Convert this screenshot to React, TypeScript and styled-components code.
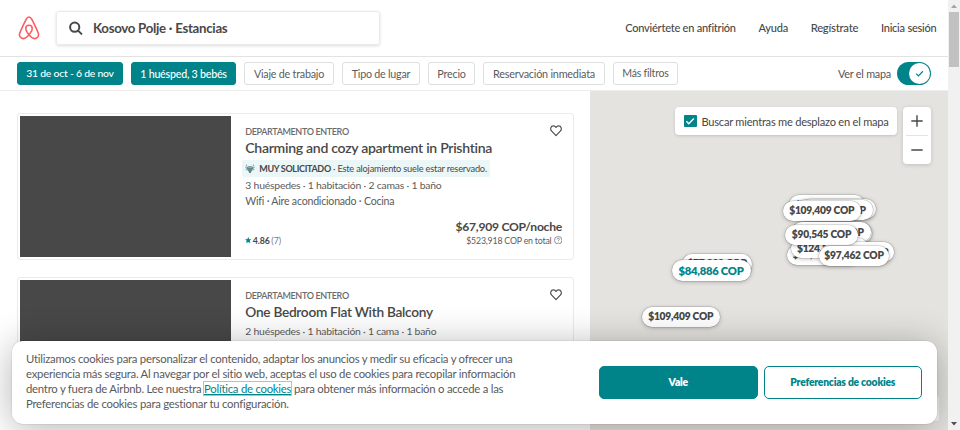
import React from "react";
import styled, { createGlobalStyle, css } from "styled-components";

const Global = createGlobalStyle`
  *{box-sizing:border-box}
  html,body{margin:0;overflow:hidden}
  body{font-family:Lato,"Noto Sans",sans-serif;color:#484848;background:#fff}
  button{font-family:inherit;padding:0;cursor:pointer}
`;
const teal = "#008489";

/* Slightly enlarged letters set tighter, so a line keeps the width of its nominal size. */
const type = (size: number) => css`font-size:${(size * 1.05).toFixed(2)}px;letter-spacing:-.0212em;`;

const Window = styled.div`display:flex;width:960px;height:430px;overflow:hidden;`;
const Page = styled.div`position:relative;width:948px;height:430px;display:flex;flex-direction:column;overflow:hidden;`;

const Header = styled.header`
  flex:none;height:57px;display:flex;align-items:center;padding:0 11.5px 0 18px;border-bottom:1px solid #e2e2e2;
`;
const Logo = styled.svg`width:22px;height:24px;flex:none;`;
const SearchBox = styled.div`
  width:324px;height:34px;margin-left:16px;display:flex;align-items:center;gap:10px;padding-left:12px;
  border:1px solid #ebebeb;border-radius:3px;box-shadow:0 1px 3px rgba(0,0,0,.14);
  ${type(12.62)}font-weight:700;
  svg{width:14px;height:14px;}
`;
const Nav = styled.nav`margin-left:auto;display:flex;gap:22.7px;font-weight:500;`;
const NavLink = styled.a<{ $size: number }>`${p => type(p.$size)}line-height:14px;white-space:nowrap;`;

const Filters = styled.div`
  flex:none;height:34px;display:flex;align-items:center;padding:0 17px;gap:8px;border-bottom:1px solid #ededed;
`;
const Chip = styled.button<{ $w: number; $size: number; $on?: boolean }>`
  width:${p => p.$w}px;height:23px;flex:none;border-radius:3px;white-space:nowrap;${p => type(p.$size)}
  padding-bottom:1px;
  border:1px solid ${p => (p.$on ? teal : "#dce0e0")};
  background:${p => (p.$on ? teal : "#fff")};color:${p => (p.$on ? "#fff" : "#5c5c5c")};
  ${p => p.$on && css`font-weight:500;`}
`;
const MapSwitch = styled.label`margin-left:auto;display:flex;align-items:center;gap:6px;${type(10.3)}color:#555;`;
const Track = styled.span`
  width:34px;height:23px;border-radius:12px;background:${teal};display:flex;justify-content:flex-end;padding:1px;
`;
const Knob = styled.span`
  width:21px;height:21px;border-radius:50%;background:#fff;display:grid;place-items:center;
  svg{width:9px;height:9px;}
`;

const Body = styled.main`flex:1;min-height:0;display:flex;`;
const Results = styled.section`
  width:590px;flex:none;padding:22px 16px 0 17px;display:flex;flex-direction:column;gap:17px;overflow:hidden;
`;
const Card = styled.article`
  flex:none;height:147px;border:1px solid #ebebeb;border-radius:3px;padding:2px;display:flex;
`;
const Photo = styled.div`width:211px;height:141px;background:#484848;flex:none;`;
const Info = styled.div`flex:1;min-width:0;display:flex;flex-direction:column;padding:9px 9px 0 14.3px;`;
const Top = styled.div`display:flex;justify-content:space-between;height:15px;`;
const Kicker = styled.div`font-size:9px;font-weight:600;letter-spacing:-.36px;line-height:12px;padding-top:1px;color:#6b6b6b;`;
const Heart = styled.svg`width:12px;height:12px;`;
const Title = styled.h2<{ $size: number }>`margin:0 0 5px;${p => type(p.$size)}font-weight:600;line-height:15px;white-space:nowrap;`;
const Badge = styled.div`
  align-self:flex-start;margin:0 0 1px -3px;width:248px;height:17px;display:flex;align-items:center;padding-left:3px;
  border-radius:2px;background:#ebf6f6;${type(8.8)}white-space:nowrap;
  svg{width:10px;height:10px;margin-right:4px;}
  b{font-size:9px;letter-spacing:-.33px;margin-right:2.2px;}
`;
const Detail = styled.div<{ $size: number }>`${p => type(p.$size)}line-height:15.500px;color:#5c5c5c;white-space:nowrap;`;
const Bottom = styled.div`display:flex;justify-content:space-between;align-items:flex-end;padding-top:10.5px;`;
const Rating = styled.div`
  display:flex;align-items:center;font-size:8.8px;line-height:12px;color:#777;
  svg{width:6.500px;height:6.500px;margin-right:1px;}
  b{font-weight:700;color:#484848;margin-right:1.5px;letter-spacing:-.1px;}
`;
const Price = styled.div`text-align:right;${type(11.55)}font-weight:700;line-height:14px;`;
const Total = styled.div`
  display:flex;align-items:center;justify-content:flex-end;gap:2px;${type(8.35)}font-weight:400;line-height:13px;color:#5c5c5c;
  svg{width:8.500px;height:8.500px;}
`;

const Map = styled.section`
  position:relative;flex:1;background:#e4e3df;display:flex;justify-content:flex-end;align-items:flex-start;gap:6px;padding:16px 17px;
`;
const Follow = styled.label`
  width:222px;height:28px;border-radius:4px;background:#fff;box-shadow:0 1px 3px rgba(0,0,0,.15);
  display:flex;align-items:center;padding-left:9px;gap:5px;${type(10.57)}white-space:nowrap;
`;
const Check = styled.span`
  width:12.500px;height:12.500px;border-radius:1px;background:${teal};display:grid;place-items:center;
  svg{width:10px;height:10px;}
`;
const Zoom = styled.div`
  width:28px;height:57px;border-radius:4px;background:#fff;box-shadow:0 1px 4px rgba(0,0,0,.16);padding:0 3px;
`;
const ZoomKey = styled.button`
  display:grid;place-items:center;width:22px;height:28.500px;border:0;background:none;
  &:first-child{border-bottom:1px solid #e4e4e4;}
  svg{width:12px;height:12px;}
`;
const Pin = styled.div<{ $x: number; $y: number; $w: number; $active?: boolean }>`
  position:absolute;left:${p => p.$x - 590}px;top:${p => p.$y - 91}px;width:${p => p.$w}px;
  height:${p => (p.$active ? 21 : 20)}px;border-radius:11px;background:#fff;
  display:flex;align-items:center;justify-content:center;padding-bottom:1px;white-space:nowrap;
  font-weight:800;${p => type(p.$active ? 10.7 : 9.75)}
  color:${p => (p.$active ? teal : "#484848")};
  box-shadow:0 0 0 .5px rgba(0,0,0,.18),0 1px 4px rgba(0,0,0,.25);
`;
const Attribution = styled.div`position:absolute;right:9px;bottom:9px;width:60px;height:25px;background:#f4f4f4;border-radius:2px;`;

const Banner = styled.aside`
  position:absolute;left:12px;top:340.500px;width:924.500px;height:83px;border-radius:11px;background:#fff;z-index:2;
  box-shadow:0 0 0 .5px rgba(0,0,0,.1),0 4px 37px rgba(0,0,0,.3);
  display:flex;align-items:center;justify-content:space-between;padding:0 14.500px 0 14px;
`;
const Copy = styled.p`margin:0;${type(10.8)}line-height:14.8px;color:#5a5a5a;white-space:nowrap;`;
const Policy = styled.a`color:${teal};text-decoration:underline;outline:1.3px solid #9dc1fb;`;
const Actions = styled.div`display:flex;gap:6px;`;
const Action = styled.button<{ $solid?: boolean }>`
  width:158.500px;height:33px;border-radius:5px;border:1px solid ${teal};${type(9.85)}font-weight:800;padding-bottom:1px;
  background:${p => (p.$solid ? teal : "#fff")};color:${p => (p.$solid ? "#fff" : teal)};
`;

const Scrollbar = styled.div`
  width:12px;height:430px;background:#f1f1f1;display:flex;flex-direction:column;align-items:center;justify-content:space-between;
`;
const Thumb = styled.div`width:10px;height:55px;background:#c1c1c1;`;
const Arrow = styled.svg`width:12px;height:12px;`;
const Upper = styled.div`display:flex;flex-direction:column;align-items:center;`;

const Tick = ({ color }: { color: string }) => (
  <svg viewBox="0 0 10 10" fill="none" stroke={color} strokeWidth="1.3"><path d="M1.3 5.2 3.8 7.7 8.8 2.5" /></svg>
);
const HeartIcon = () => (
  <Heart viewBox="0 0 12 12" fill="none" stroke="#484848" strokeWidth="1.1" strokeLinejoin="round">
    <path d="M6 10.700 1.700 6.200C-.3 4.100.900.900 3.400.900 4.700.900 5.500 1.600 6 2.500 6.500 1.600 7.300.900 8.600.900c2.500 0 3.700 3.200 1.700 5.300Z" />
  </Heart>
);

const chips: [string, number, number, boolean?][] = [
  ["31 de oct - 6 de nov", 106, 9.9, true],
  ["1 huésped, 3 bebés", 105, 10.15, true],
  ["Viaje de trabajo", 90, 10.25],
  ["Tipo de lugar", 78, 10.2],
  ["Precio", 47, 10.3],
  ["Reservación inmediata", 122, 10.35],
  ["Más filtros", 65, 10.05],
];
const pins: [string, number, number, number, boolean?][] = [
  ["$109,409 COP", 789, 195, 76],
  ["$109,409 COP", 800, 199, 76],
  ["$109,409 COP", 794, 200, 78.5],
  ["$109,409 COP", 783, 200.5, 77.5],
  ["$109,409 COP", 796, 223, 76],
  ["$109,409 COP", 792, 222, 78.5],
  ["$99,712 COP", 786.5, 244.5, 72],
  ["$124,336 COP", 791, 238, 77],
  ["$97,462 COP", 823, 242, 71],
  ["$90,545 COP", 785, 224.5, 73],
  ["$97,462 COP", 819, 245.5, 70],
  ["$77,322 COP", 682, 253.5, 70],
  ["$84,886 COP", 671.5, 260, 79, true],
  ["$109,409 COP", 642, 306.5, 77.5],
];

export default function App() {
  return (
    <Window>
      <Global />
      <Page>
        <Header>
          <Logo viewBox="0 0 22 24" fill="none" stroke="#ff5a5f" strokeWidth="1.55" strokeLinejoin="round">
            <path d="M11 18.8C8.9 16.2 7.8 14.3 7.8 12.5a3.2 3.2 0 0 1 6.4 0c0 1.8-1.1 3.7-3.2 6.3C8.2 22.2 5.900 23.2 3.900 22.3 1.8 21.4 1 19.2 1.8 17 3.3 13.1 5.5 8.7 8 3.7 9 1.6 9.7.9 11 .9s2 .7 3 2.8c2.5 5 4.7 9.4 6.2 13.3.8 2.2 0 4.4-2.1 5.300-2 .9-4.300-.1-7.100-3.500Z" />
          </Logo>
          <SearchBox>
            <svg viewBox="0 0 14 14" fill="none" stroke="#484848" strokeWidth="2"><circle cx="5.700" cy="6.200" r="4.600" /><path d="m9.100 9.600 3.300 3.300" strokeLinecap="round" /></svg>
            Kosovo Polje · Estancias
          </SearchBox>
          <Nav>
            <NavLink $size={10.5}>Conviértete en anfitrión</NavLink>
            <NavLink $size={10.5}>Ayuda</NavLink>
            <NavLink $size={10.75}>Regístrate</NavLink>
            <NavLink $size={10.5}>Inicia sesión</NavLink>
          </Nav>
        </Header>
        <Filters>
          {chips.map(([t, w, s, on]) => <Chip key={t} $w={w} $size={s} $on={on}>{t}</Chip>)}
          <MapSwitch>Ver el mapa<Track><Knob><Tick color={teal} /></Knob></Track></MapSwitch>
        </Filters>
        <Body>
          <Results>
            <Card>
              <Photo />
              <Info>
                <Top><Kicker>DEPARTAMENTO ENTERO</Kicker><HeartIcon /></Top>
                <Title $size={13.4}>Charming and cozy apartment in Prishtina</Title>
                <Badge>
                  <svg viewBox="0 0 10 10" fill="none" stroke="#66767a" strokeWidth=".7">
                    <path d="M1.6 3.8h6.8L5 9Z" fill="#3fa9ac" /><path d="M.2 2.800 1.600 3.800 3.200 2.500h3.600l1.600 1.300 1.400-1M1.600.6v1.600M8.400.6v1.600M.7 5.600l1.500.4M9.300 5.600l-1.500.4M5 9 3.600 3.800M5 9l1.400-5.200" />
                  </svg>
                  <b>MUY SOLICITADO</b>· Este alojamiento suele estar reservado.
                </Badge>
                <Detail $size={9.92}>3 huéspedes · 1 habitación · 2 camas · 1 baño</Detail>
                <Detail $size={10.1}>Wifi · Aire acondicionado · Cocina</Detail>
                <Bottom>
                  <Rating>
                    <svg viewBox="0 0 20 20" fill={teal}><path d="m10 0 3 7h7l-5.500 4.700 2.200 7.800L10 15l-6.700 4.500 2.200-7.800L0 7h7z" /></svg>
                    <b>4.86</b>(7)
                  </Rating>
                  <Price>
                    $67,909 COP/noche
                    <Total>
                      $523,918 COP en total
                      <svg viewBox="0 0 12 12" fill="none" stroke="#666" strokeWidth="1"><circle cx="6" cy="6" r="5.300" /><path d="M4.400 4.800C4.400 2.600 7.700 2.700 7.600 4.700 7.500 5.800 6 5.900 6 7.300M6 8.300v1" /></svg>
                    </Total>
                  </Price>
                </Bottom>
              </Info>
            </Card>
            <Card>
              <Photo />
              <Info>
                <Top><Kicker>DEPARTAMENTO ENTERO</Kicker><HeartIcon /></Top>
                <Title $size={13.05}>One Bedroom Flat With Balcony</Title>
                <Detail $size={9.88}>2 huéspedes · 1 habitación · 1 cama · 1 baño</Detail>
              </Info>
            </Card>
          </Results>
          <Map>
            {pins.map(([t, x, y, w, a], i) => <Pin key={i} $x={x} $y={y} $w={w} $active={a}>{t}</Pin>)}
            <Follow><Check><Tick color="#fff" /></Check>Buscar mientras me desplazo en el mapa</Follow>
            <Zoom>
              <ZoomKey aria-label="Acercar"><svg viewBox="0 0 12 12" stroke="#484848" strokeWidth="1.4"><path d="M.3 6h11.4M6 .3v11.4" /></svg></ZoomKey>
              <ZoomKey aria-label="Alejar"><svg viewBox="0 0 12 12" stroke="#484848" strokeWidth="1.5"><path d="M.3 6h11.4" /></svg></ZoomKey>
            </Zoom>
            <Attribution />
          </Map>
        </Body>
        <Banner>
          <Copy>
            Utilizamos cookies para personalizar el contenido, adaptar los anuncios y medir su eficacia y ofrecer una<br />
            experiencia más segura. Al navegar por el sitio web, aceptas el uso de cookies para recopilar información<br />
            dentro y fuera de Airbnb. Lee nuestra <Policy>Política de cookies</Policy> para obtener más información o accede a las<br />
            Preferencias de cookies para gestionar tu configuración.
          </Copy>
          <Actions><Action $solid>Vale</Action><Action>Preferencias de cookies</Action></Actions>
        </Banner>
      </Page>
      <Scrollbar>
        <Upper><Arrow viewBox="0 0 12 12" fill="#a3a3a3"><path d="M3 8 6 4.5 9 8z" /></Arrow><Thumb /></Upper>
        <Arrow viewBox="0 0 12 12" fill="#505050"><path d="M3 4 6 7.5 9 4z" /></Arrow>
      </Scrollbar>
    </Window>
  );
}
